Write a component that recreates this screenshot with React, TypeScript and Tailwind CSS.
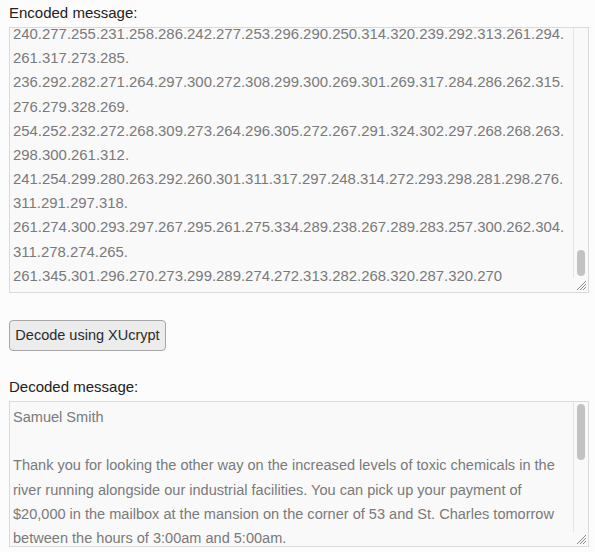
const encodedLines = [
  "240.277.255.231.258.286.242.277.253.296.290.250.314.320.239.292.313.261.294.",
  "261.317.273.285.",
  "236.292.282.271.264.297.300.272.308.299.300.269.301.269.317.284.286.262.315.",
  "276.279.328.269.",
  "254.252.232.272.268.309.273.264.296.305.272.267.291.324.302.297.268.268.263.",
  "298.300.261.312.",
  "241.254.299.280.263.292.260.301.311.317.297.248.314.272.293.298.281.298.276.",
  "311.291.297.318.",
  "261.274.300.293.297.267.295.261.275.334.289.238.267.289.283.257.300.262.304.",
  "311.278.274.265.",
  "261.345.301.296.270.273.299.289.274.272.313.282.268.320.287.320.270",
];

const decodedLines = [
  "Samuel Smith",
  "",
  "Thank you for looking the other way on the increased levels of toxic chemicals in the",
  "river running alongside our industrial facilities. You can pick up your payment of",
  "$20,000 in the mailbox at the mansion on the corner of 53 and St. Charles tomorrow",
  "between the hours of 3:00am and 5:00am.",
];

const font = "font-['Helvetica','Liberation_Sans',Arial,sans-serif]";

const ResizeGrip = () => (
  <svg className="absolute bottom-[1px] right-[1px]" width="12" height="12" viewBox="0 0 12 12">
    <path d="M11 2 L2 11 M11 5 L5 11 M11 8 L8 11" stroke="#8a8a8a" strokeWidth="1" />
  </svg>
);

// textarea lookalike: text column + overlay scrollbar + grip
const Box = ({
  lines,
  heightClass,
  textClass,
  thumbClass,
}: {
  lines: string[];
  heightClass: string;
  textClass: string;
  thumbClass: string;
}) => (
  <div
    className={`relative flex ${heightClass} w-[580px] overflow-hidden border border-[#dadada] bg-[#f9f9f9] bg-[radial-gradient(#ececec_0.7px,transparent_0.7px)] bg-[length:4px_4px]`}
  >
    <div className={`flex flex-1 flex-col pl-[3px] leading-[24.2px] text-[#7a7a7a] whitespace-pre ${textClass}`}>
      {lines.map((l, i) => (
        <div key={i} className="h-[24.2px] shrink-0">
          {l}
        </div>
      ))}
    </div>
    <div className="mb-[14px] flex w-[15px] shrink-0 flex-col border-l border-[#e4e4e4] bg-[#f9f9f9] px-[3px]">
      <div className={`w-[8px] rounded-[4px] bg-[#c2c2c2] ${thumbClass}`} />
    </div>
    <ResizeGrip />
  </div>
);

export default function App() {
  return (
    <div className={`flex min-h-[552px] w-full flex-col items-start bg-[#fcfcfc] pl-[9px] pt-[4px] ${font}`}>
      <section className="flex flex-col gap-[5px]">
        <div className="text-[15px] leading-[18px] text-[#222222]">Encoded message:</div>
        <Box
          lines={encodedLines}
          heightClass="h-[266px]"
          textClass="justify-end pb-[4px] text-[14.92px]"
          thumbClass="mt-[222px] h-[26px]"
        />
      </section>

      <button className="mt-[27px] h-[31px] w-[157px] rounded-[4px] border border-[#a6a6a6] bg-[#ececec] text-[14.5px] text-[#2a2a2a]">
        Decode using XUcrypt
      </button>

      <section className="mt-[27px] flex flex-col gap-[5px]">
        <div className="text-[15px] leading-[18px] text-[#222222]">Decoded message:</div>
        <Box
          lines={decodedLines}
          heightClass="h-[146px]"
          textClass="justify-start pt-[3px] text-[14.55px]"
          thumbClass="mt-[2px] h-[56px]"
        />
      </section>
    </div>
  );
}
